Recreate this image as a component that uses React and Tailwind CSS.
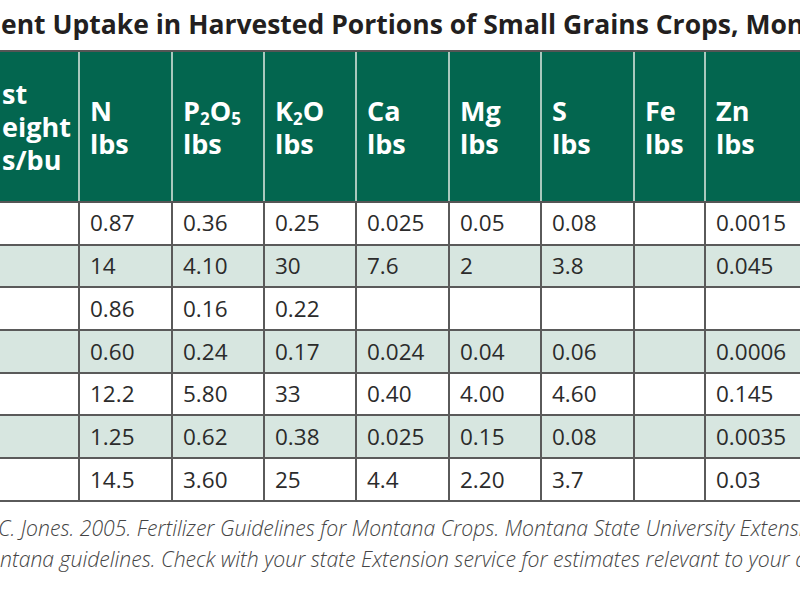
import React from 'react';
import clsx from 'clsx';

const widths = ['w-[78px]', 'w-[93px]', 'w-[92px]', 'w-[92px]', 'w-[93px]', 'w-[92px]', 'w-[93px]', 'w-[71px]', 'flex-1'];

const rows = [
  ['', '0.87', '0.36', '0.25', '0.025', '0.05', '0.08', '', '0.0015'],
  ['', '14', '4.10', '30', '7.6', '2', '3.8', '', '0.045'],
  ['', '0.86', '0.16', '0.22', '', '', '', '', ''],
  ['', '0.60', '0.24', '0.17', '0.024', '0.04', '0.06', '', '0.0006'],
  ['', '12.2', '5.80', '33', '0.40', '4.00', '4.60', '', '0.145'],
  ['', '1.25', '0.62', '0.38', '0.025', '0.15', '0.08', '', '0.0035'],
  ['', '14.5', '3.60', '25', '4.4', '2.20', '3.7', '', '0.03'],
];

const Sub = ({ children }) => <span className="text-[17px] align-[-4px] leading-none">{children}</span>;

const headers = [
  <>st<br />eight<br />s/bu</>,
  <>N<br />lbs</>,
  <>P<Sub>2</Sub>O<Sub>5</Sub><br />lbs</>,
  <>K<Sub>2</Sub>O<br />lbs</>,
  <>Ca<br />lbs</>,
  <>Mg<br />lbs</>,
  <>S<br />lbs</>,
  <>Fe<br />lbs</>,
  <>Zn<br />lbs</>,
];

export default function App() {
  return (
    <div className="w-[800px] h-[600px] overflow-hidden bg-white font-['Open_Sans',sans-serif] text-[#2b2b2b]">
      {/* title, cut off at both ends like the source crop */}
      <div className="h-[50px] pt-[11px] pl-[1px] whitespace-nowrap text-[26.5px] leading-[26px] font-bold text-[#231f20]">
        ent Uptake in Harvested Portions of Small Grains Crops, Montana
      </div>

      <div className="flex h-[153px] border-y-2 border-[#555] bg-[#03664f] text-white text-[27px] font-bold leading-[33px]">
        {headers.map((h, i) => (
          <div
            key={i}
            className={clsx(
              'flex items-center whitespace-nowrap',
              widths[i],
              i === 0 ? 'pl-[2px]' : 'pl-[10px] border-l-2 border-[#a9c8bd]',
            )}
          >
            <div>{h}</div>
          </div>
        ))}
      </div>

      {rows.map((r, ri) => (
        <div
          key={ri}
          className={clsx('flex h-[42.7px] border-b-2 border-[#5a5a5a]', ri % 2 === 1 ? 'bg-[#d7e6e0]' : 'bg-white')}
        >
          {r.map((v, i) => (
            <div
              key={i}
              className={clsx(
                'flex items-center text-[22.5px] whitespace-nowrap',
                widths[i],
                i > 0 && 'pl-[10px] border-l-2 border-[#5a5a5a]',
              )}
            >
              {v}
            </div>
          ))}
        </div>
      ))}

      <div className="pt-[10px] text-[21.2px] leading-[31px] italic font-light text-[#444] whitespace-nowrap">
        <p className="-ml-[2px]">C. Jones. 2005. Fertilizer Guidelines for Montana Crops. Montana State University Extension.</p>
        <p>ntana guidelines. Check with your state Extension service for estimates relevant to your area.</p>
      </div>
    </div>
  );
}
